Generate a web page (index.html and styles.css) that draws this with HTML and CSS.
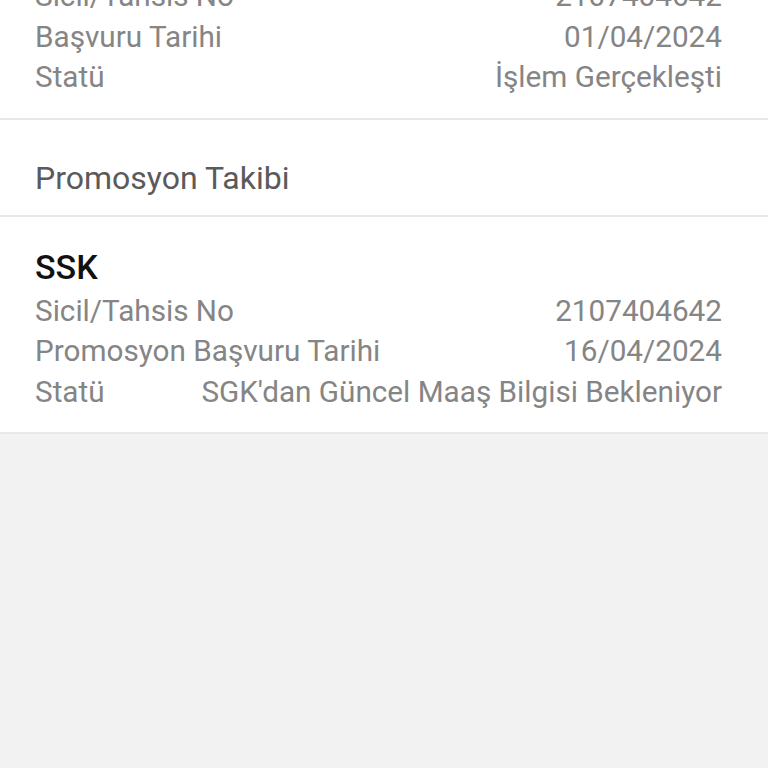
FILE: index.html
```html
<!DOCTYPE html>
<html lang="tr">
<head>
  <meta charset="UTF-8" />
  <title>Başvuru Takibi</title>
  <link rel="stylesheet" href="styles.css">
</head>
<body>
  <div id="screen">
    <div class="card card-cut">
      <div class="row"><span>Sicil/Tahsis No</span><span>2107404642</span></div>
      <div class="row"><span>Başvuru Tarihi</span><span>01/04/2024</span></div>
      <div class="row"><span>Statü</span><span>İşlem Gerçekleşti</span></div>
    </div>

    <div class="section-title">Promosyon Takibi</div>

    <div class="card">
      <div class="card-title">SSK</div>
      <div class="row"><span>Sicil/Tahsis No</span><span>2107404642</span></div>
      <div class="row"><span>Promosyon Başvuru Tarihi</span><span>16/04/2024</span></div>
      <div class="row"><span>Statü</span><span>SGK'dan Güncel Maaş Bilgisi Bekleniyor</span></div>
    </div>
  </div>
</body>
</html>
```

FILE: styles.css
```css
html, body {
  margin: 0;
  padding: 0;
  height: 100%;
  font-family: Roboto, "Noto Sans", sans-serif;
  background: #f2f2f2;
  overflow: hidden;
}

#screen {
  margin-top: -24px;
}

.card {
  background: #fff;
  padding: 26px 46px 20px 35px;
  border-bottom: 2px solid #e8e8e8;
}

.card-cut {
  padding-top: 0;
}

.card-title {
  font-size: 34px;
  font-weight: 500;
  color: #111;
  line-height: 48px;
}

.row {
  display: flex;
  justify-content: space-between;
  font-size: 29.7px;
  line-height: 40.5px;
  color: #858585;
}

.section-title {
  background: #fff;
  padding: 38px 35px 17px;
  font-size: 32px;
  line-height: 40px;
  color: #5a5a5a;
  border-bottom: 2px solid #e8e8e8;
}
```
